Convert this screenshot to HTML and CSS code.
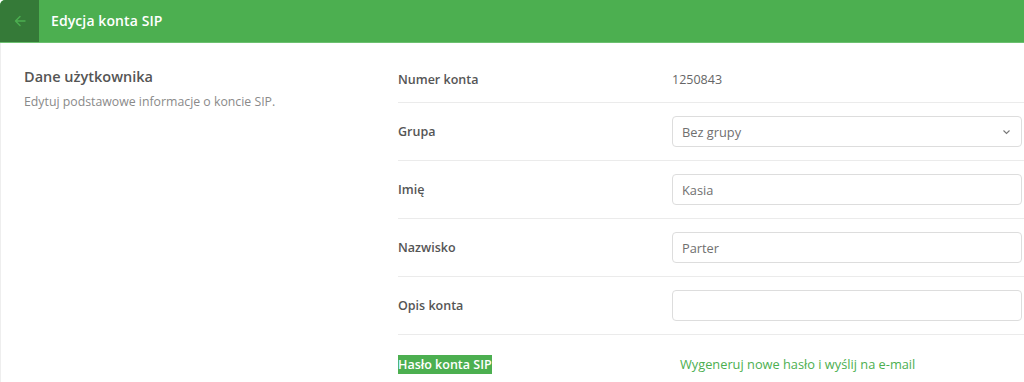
FILE: index.html
```html
<!DOCTYPE html>
<html lang="pl">
<head>
<meta charset="utf-8">
<link rel="stylesheet" href="styles.css">
</head>
<body>
<header class="topbar">
  <button class="back" aria-label="Wstecz">
    <svg width="14" height="14" viewBox="0 0 14 14"><path d="M12 7H2.5M7 2.5L2.5 7L7 11.5" fill="none" stroke="#4caf50" stroke-width="1.4" stroke-linecap="round" stroke-linejoin="round"/></svg>
  </button>
  <h1 class="title">Edycja konta SIP</h1>
</header>
<main class="content">
  <section class="intro">
    <h2 class="intro-title">Dane użytkownika</h2>
    <p class="intro-text">Edytuj podstawowe informacje o koncie SIP.</p>
  </section>
  <section class="form">
    <div class="row">
      <div class="label">Numer konta</div>
      <div class="value plain">1250843</div>
    </div>
    <div class="row">
      <div class="label">Grupa</div>
      <div class="value"><div class="field select">Bez grupy<svg width="9" height="6" viewBox="0 0 9 6"><path d="M1.5 1.5L4.5 4.5L7.5 1.5" fill="none" stroke="#777" stroke-width="1.1"/></svg></div></div>
    </div>
    <div class="row">
      <div class="label">Imię</div>
      <div class="value"><div class="field">Kasia</div></div>
    </div>
    <div class="row">
      <div class="label">Nazwisko</div>
      <div class="value"><div class="field">Parter</div></div>
    </div>
    <div class="row">
      <div class="label">Opis konta</div>
      <div class="value"><div class="field"></div></div>
    </div>
    <div class="row last">
      <div class="label"><span class="hl">Hasło konta SIP</span></div>
      <div class="value"><a class="link">Wygeneruj nowe hasło i wyślij na e-mail</a></div>
    </div>
  </section>
</main>
</body>
</html>
```
FILE: styles.css
```css
* { box-sizing: border-box; }
html, body { margin: 0; padding: 0; background: #fff; }
body {
  font-family: "Open Sans", "Noto Sans", "Liberation Sans", sans-serif;
  color: #555;
  width: 1024px;
  height: 382px;
  overflow: hidden;
}
.topbar {
  display: flex;
  height: 43px;
  background: #4caf50;
  border-bottom: 1px solid #6cc070;
  border-top-left-radius: 5px;
  overflow: hidden;
}
.back {
  width: 39px;
  height: 42px;
  border: 0;
  padding: 0;
  margin: 0;
  background: #357a38;
  display: flex;
  align-items: center;
  justify-content: center;
  border-top-left-radius: 5px;
}
.title {
  margin: 0 0 0 12px;
  font-size: 14px;
  font-weight: 600;
  color: #fff;
  line-height: 42px;
  letter-spacing: 0.1px;
}
.content {
  display: flex;
  border-left: 1px solid #eee;
  height: 339px;
}
.intro {
  width: 397px;
  padding: 24px 0 0 23px;
}
.intro-title {
  margin: 0;
  font-size: 14.5px;
  font-weight: 600;
  color: #555;
  line-height: 20px;
}
.intro-text {
  margin: 7px 0 0;
  font-size: 12.3px;
  color: #8a8a8a;
  line-height: 16px;
}
.form {
  flex: 1;
  padding-top: 14px;
}
.row {
  display: flex;
  align-items: center;
  border-bottom: 1px solid #ebebeb;
  min-height: 44px;
}
.row + .row { min-height: 58px; }
.row:first-child { height: 46px; align-items: flex-start; padding-top: 14px; }
.row.last { border-bottom: 0; height: 54px; }
.label {
  width: 274px;
  font-size: 12.5px;
  font-weight: 600;
  color: #555;
}
.value { flex: 1; font-size: 12.5px; padding-right: 2px; }
.plain { color: #666; font-size: 12.5px; }
.field {
  height: 31px;
  border: 1px solid #ddd;
  border-radius: 4px;
  padding: 0 10px 0 9px;
  display: flex;
  align-items: center;
  color: #707070;
  font-size: 12.8px;
}
.select { justify-content: space-between; }
.hl {
  background: #4caf50;
  color: #fff;
  padding: 1px 0;
}
.link {
  color: #4caf50;
  font-size: 12.8px;
  padding-left: 8px;
}
```
